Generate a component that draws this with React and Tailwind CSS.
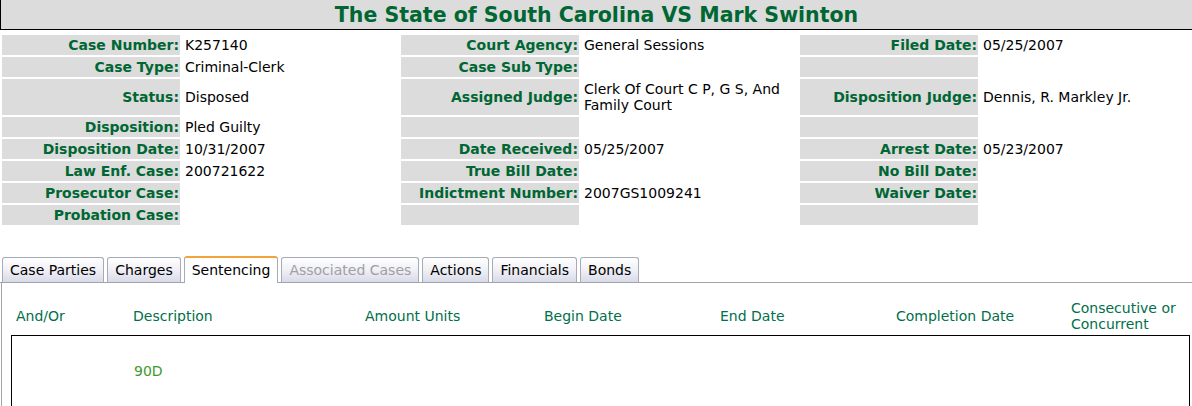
import React from 'react';

const rows = [
  [['Case Number:', 'K257140'], ['Court Agency:', 'General Sessions'], ['Filed Date:', '05/25/2007']],
  [['Case Type:', 'Criminal-Clerk'], ['Case Sub Type:', ''], ['', '']],
  [['Status:', 'Disposed'], ['Assigned Judge:', 'Clerk Of Court C P, G S, And Family Court'], ['Disposition Judge:', 'Dennis, R. Markley Jr.']],
  [['Disposition:', 'Pled Guilty'], ['', ''], ['', '']],
  [['Disposition Date:', '10/31/2007'], ['Date Received:', '05/25/2007'], ['Arrest Date:', '05/23/2007']],
  [['Law Enf. Case:', '200721622'], ['True Bill Date:', ''], ['No Bill Date:', '']],
  [['Prosecutor Case:', ''], ['Indictment Number:', '2007GS1009241'], ['Waiver Date:', '']],
  [['Probation Case:', ''], ['', ''], ['', '']],
];

const tabs = [
  { name: 'Case Parties' },
  { name: 'Charges' },
  { name: 'Sentencing', active: true },
  { name: 'Associated Cases', disabled: true },
  { name: 'Actions' },
  { name: 'Financials' },
  { name: 'Bonds' },
];

const columns = [
  { title: 'And/Or', w: 'w-[117px]' },
  { title: 'Description', w: 'w-[232px]' },
  { title: 'Amount Units', w: 'w-[179px]' },
  { title: 'Begin Date', w: 'w-[176px]' },
  { title: 'End Date', w: 'w-[176px]' },
  { title: 'Completion Date', w: 'w-[175px]' },
  { title: 'Consecutive or Concurrent', w: 'w-[118px]' },
];

const App = () => {
  return (
    <div className="w-[1192px] h-[406px] overflow-hidden bg-white font-['DejaVu_Sans','Verdana',sans-serif] text-[14px] leading-[16px] text-black">
      {/* Title bar */}
      <div className="h-[30px] border-l border-b border-black bg-[#dcdcdc] flex items-center justify-center">
        <h1 className="text-[20.5px] leading-[26px] font-bold text-[#006633]">
          The State of South Carolina VS Mark Swinton
        </h1>
      </div>

      {/* Case details */}
      <table className="w-full mt-[3px] border-separate border-spacing-x-[2px] border-spacing-y-[2px] table-fixed">
        <colgroup>
          <col className="w-[178px]" />
          <col className="w-[217px]" />
          <col className="w-[178px]" />
          <col className="w-[217px]" />
          <col className="w-[178px]" />
          <col />
        </colgroup>
        <tbody>
          {rows.map((row, i) => (
            <tr key={i}>
              {row.map(([label, value], j) => (
                <React.Fragment key={j}>
                  <td className="bg-[#dcdcdc] text-right font-bold text-[#006633] py-[2px] pr-[1px] align-middle whitespace-nowrap">
                    {label}
                  </td>
                  <td className="pl-[3px] py-[2px] align-middle">{value}</td>
                </React.Fragment>
              ))}
            </tr>
          ))}
        </tbody>
      </table>

      {/* Tabs */}
      <div className="mt-[29px] flex items-end gap-[3px] pl-[2px] border-b border-[#a0a4a8] h-[27px]">
        {tabs.map((t) => (
          <div
            key={t.name}
            className={
              t.active
                ? 'h-[27px] -mb-px px-[7px] pt-[4px] bg-white border-x border-[#a5acb5] border-t-2 border-t-[#f2a33a] rounded-t-[3px] text-black'
                : `h-[25px] px-[7px] pt-[4px] border-x border-t border-[#a5acb5] rounded-t-[3px] bg-gradient-to-b from-white via-[#f0f0f6] to-[#d8dae8] ${
                    t.disabled ? 'text-[#a0a0a0]' : 'text-black'
                  }`
            }
          >
            {t.name}
          </div>
        ))}
      </div>

      {/* Sentencing panel */}
      <div className="ml-[1px] border-l border-[#a0a4a8] pt-[14px] h-[200px]">
        <div className="flex items-center h-[38px] pl-[14px] text-[#00704a]">
          {columns.map((c) => (
            <div key={c.title} className={`${c.w} shrink-0`}>
              {c.title}
            </div>
          ))}
        </div>
        <div className="ml-[9px] w-[1179px] h-[120px] border border-black pt-[27px] pl-[122px]">
          <span className="text-[#3d9a2a]">90D</span>
        </div>
      </div>
    </div>
  );
};

export default App;
